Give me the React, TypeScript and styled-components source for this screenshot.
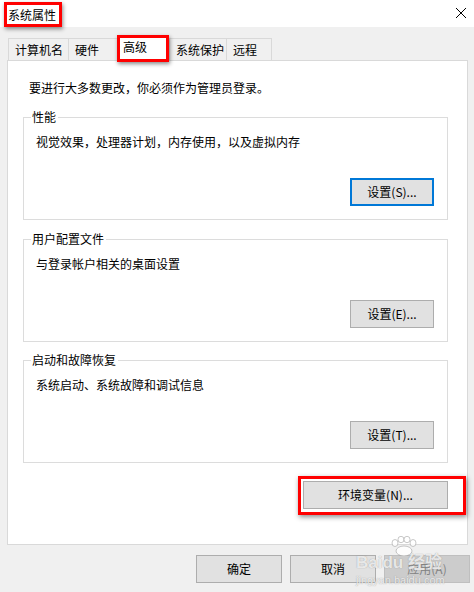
import React from "react";
import styled, { createGlobalStyle } from "styled-components";

const Global = createGlobalStyle`
  html, body { margin: 0; padding: 0; background: #f0f0f0; }
  body { font-family: "Noto Sans CJK SC", "Noto Sans", sans-serif; font-size: 12px; color: #000; }
  * { box-sizing: border-box; }
`;

const Window = styled.div`
  position: relative;
  width: 474px;
  height: 592px;
  display: flex;
  flex-direction: column;
  background: #f0f0f0;
  overflow: hidden;
`;

const TitleBar = styled.div`
  height: 27px;
  background: #ffffff;
  display: flex;
  align-items: flex-start;
  justify-content: space-between;
  padding: 2px 7px 0 4px;
`;

const TitleLabel = styled.span`
  display: inline-flex;
  align-items: center;
  height: 25px;
  padding: 0 3px 0 1px;
  border: 3px solid #ff0000;
  box-shadow: 1px 2px 4px rgba(0, 0, 0, 0.45);
  font-size: 12px;
  line-height: 16px;
`;

const CloseButton = styled.div`
  width: 12px;
  height: 12px;
  margin-top: 5px;
  display: flex;
`;

const Body = styled.div`
  flex: 1;
  display: flex;
  flex-direction: column;
  padding: 8px 0 0 7px;
`;

const TabRow = styled.div`
  display: flex;
  align-items: flex-end;
  height: 25px;
  margin-left: 1px;
  position: relative;
  z-index: 1;
`;

const Tab = styled.div<{ $w: number; $active?: boolean; $ml?: number }>`
  width: ${(p) => p.$w}px;
  margin-left: ${(p) => p.$ml ?? 0}px;
  height: ${(p) => (p.$active ? 27 : 22)}px;
  margin-bottom: ${(p) => (p.$active ? -2 : 0)}px;
  background: ${(p) => (p.$active ? "#ffffff" : "#f0f0f0")};
  border: ${(p) => (p.$active ? "3px solid #ff0000" : "1px solid #d9d9d9")};
  border-bottom: ${(p) => (p.$active ? "3px solid #ff0000" : "none")};
  box-shadow: ${(p) => (p.$active ? "1px 2px 4px rgba(0,0,0,0.45)" : "none")};
  position: relative;
  z-index: ${(p) => (p.$active ? 2 : 0)};
  display: flex;
  align-items: ${(p) => (p.$active ? "flex-start" : "center")};
  padding: ${(p) => (p.$active ? "1px 0 0 3px" : "0 0 0 6px")};
  font-size: 12px;
  line-height: 16px;
  white-space: nowrap;
`;

const Panel = styled.div`
  width: 461px;
  height: 485px;
  background: #ffffff;
  border: 1px solid #d9d9d9;
  display: flex;
  flex-direction: column;
  padding: 19px 19px 0 15px;
`;

const Intro = styled.div`
  padding-left: 6px;
  font-size: 12px;
  line-height: 16px;
  height: 16px;
`;

const Group = styled.div<{ $mt: number }>`
  position: relative;
  margin-top: ${(p) => p.$mt}px;
  height: 103px;
  border: 1px solid #dcdcdc;
  display: flex;
  flex-direction: column;
  justify-content: space-between;
  padding: 16px 13px 13px 12px;
`;

const Legend = styled.span`
  position: absolute;
  top: -9px;
  left: 7px;
  padding: 0 2px 0 1px;
  background: #ffffff;
  font-size: 12px;
  line-height: 16px;
`;

const Desc = styled.div`
  font-size: 12px;
  line-height: 16px;
`;

const ButtonRow = styled.div<{ $mt?: number; $mr?: number }>`
  display: flex;
  justify-content: flex-end;
  margin-top: ${(p) => p.$mt ?? 0}px;
  margin-right: ${(p) => p.$mr ?? 0}px;
`;

const Button = styled.div<{ $w: number; $default?: boolean; $disabled?: boolean }>`
  width: ${(p) => p.$w}px;
  height: 28px;
  display: flex;
  align-items: center;
  justify-content: center;
  background: ${(p) => (p.$disabled ? "#cccccc" : "#e1e1e1")};
  border: ${(p) =>
    p.$default ? "2px solid #0078d7" : p.$disabled ? "1px solid #bfbfbf" : "1px solid #adadad"};
  color: ${(p) => (p.$disabled ? "#838383" : "#000000")};
  font-size: 12px;
  line-height: 16px;
  white-space: nowrap;
`;

const Highlight = styled.div`
  display: flex;
  padding: 2px 15px 3px 2px;
  margin-right: -18px;
  border: 3px solid #ff0000;
  box-shadow: 1px 2px 5px rgba(0, 0, 0, 0.45);
`;

const Footer = styled.div`
  display: flex;
  justify-content: flex-end;
  gap: 8px;
  margin-top: 10px;
  padding-right: 4px;
`;

const Watermark = styled.div`
  position: absolute;
  left: 356px;
  top: 536px;
  display: flex;
  flex-direction: column;
  align-items: flex-start;
  pointer-events: none;
  color: rgba(255, 255, 255, 0.8);
  text-shadow: 0 0 1px rgba(110, 110, 110, 0.7);
  font-family: "Liberation Sans", "Noto Sans CJK SC", sans-serif;
`;

const Paw = styled.svg`
  margin-left: 33px;
  display: block;
`;

const WmTop = styled.div`
  font-size: 17px;
  font-weight: bold;
  line-height: 17px;
  margin-top: -2px;
  white-space: nowrap;
`;

const WmBottom = styled.div`
  font-size: 11px;
  line-height: 13px;
  margin-top: 3px;
  white-space: nowrap;
`;

const tabs = [
  { label: "计算机名", w: 61, ml: 0 },
  { label: "硬件", w: 50, ml: -1 },
  { label: "高级", w: 52, ml: -1, active: true },
  { label: "系统保护", w: 58, ml: 0 },
  { label: "远程", w: 46, ml: -1 },
];

const groups = [
  { title: "性能", desc: "视觉效果，处理器计划，内存使用，以及虚拟内存", btn: "设置(S)...", def: true, mt: 21 },
  { title: "用户配置文件", desc: "与登录帐户相关的桌面设置", btn: "设置(E)...", mt: 19 },
  { title: "启动和故障恢复", desc: "系统启动、系统故障和调试信息", btn: "设置(T)...", mt: 18 },
];

export default function App() {
  return (
    <>
      <Global />
      <Window>
        <TitleBar>
          <TitleLabel>系统属性</TitleLabel>
          <CloseButton>
            <svg width="12" height="12" viewBox="0 0 12 12">
              <path d="M1 1 L11 11 M11 1 L1 11" stroke="#000" strokeWidth="1" fill="none" />
            </svg>
          </CloseButton>
        </TitleBar>
        <Body>
          <TabRow>
            {tabs.map((t) => (
              <Tab key={t.label} $w={t.w} $ml={t.ml} $active={t.active}>
                {t.label}
              </Tab>
            ))}
          </TabRow>
          <Panel>
            <Intro>要进行大多数更改，你必须作为管理员登录。</Intro>
            {groups.map((g) => (
              <Group key={g.title} $mt={g.mt}>
                <Legend>{g.title}</Legend>
                <Desc>{g.desc}</Desc>
                <ButtonRow>
                  <Button $w={84} $default={g.def}>
                    {g.btn}
                  </Button>
                </ButtonRow>
              </Group>
            ))}
            <ButtonRow $mt={13}>
              <Highlight>
                <Button $w={145}>环境变量(N)...</Button>
              </Highlight>
            </ButtonRow>
          </Panel>
          <Footer>
            <Button $w={86}>确定</Button>
            <Button $w={86}>取消</Button>
            <Button $w={86} $disabled>
              应用(A)
            </Button>
          </Footer>
        </Body>
        <Watermark>
          <Paw width="28" height="20" viewBox="0 0 28 20">
            <g fill="rgba(255,255,255,0.85)" stroke="rgba(140,140,140,0.6)" strokeWidth="0.8">
              <ellipse cx="6" cy="7" rx="3" ry="3.5" />
              <ellipse cx="12" cy="3.5" rx="3" ry="3.2" />
              <ellipse cx="18" cy="3.5" rx="3" ry="3.2" />
              <ellipse cx="24" cy="7" rx="3" ry="3.5" />
              <ellipse cx="15" cy="15" rx="8" ry="5" />
            </g>
          </Paw>
          <WmTop>Baidu 经验</WmTop>
          <WmBottom>jingyan.baidu.com</WmBottom>
        </Watermark>
      </Window>
    </>
  );
}
